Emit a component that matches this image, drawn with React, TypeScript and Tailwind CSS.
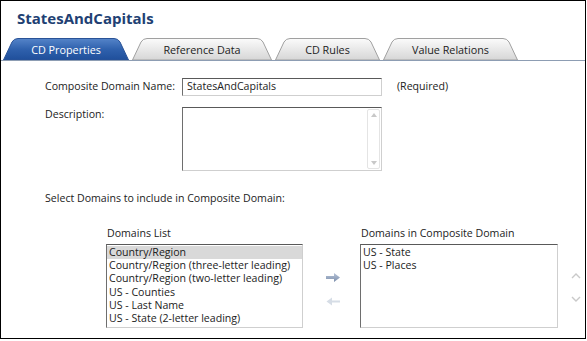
import React from "react";

const font = { fontFamily: '"Open Sans", "Noto Sans", sans-serif' };

function Tab({ w, label, active }: { w: number; label: string; active?: boolean }) {
  const h = 22;
  const d = `M0.5 ${h} L9 4 Q11 0.5 15 0.5 L${w - 15} 0.5 Q${w - 11} 0.5 ${w - 9} 4 L${w - 0.5} ${h} Z`;
  const id = active ? "gActive" : "gIdle";
  return (
    <div className="relative h-[22px] flex items-center justify-center" style={{ width: w }}>
      <svg className="absolute inset-0" width={w} height={h} viewBox={`0 0 ${w} ${h}`}>
        <defs>
          <linearGradient id="gActive" x1="0" y1="0" x2="0" y2="1">
            <stop offset="0" stopColor="#5584c9" />
            <stop offset="0.5" stopColor="#2f61ad" />
            <stop offset="1" stopColor="#1f4f9b" />
          </linearGradient>
          <linearGradient id="gIdle" x1="0" y1="0" x2="0" y2="1">
            <stop offset="0" stopColor="#fbfbfb" />
            <stop offset="1" stopColor="#d6d6d6" />
          </linearGradient>
        </defs>
        <path d={d} fill={`url(#${id})`} stroke={active ? "#2a5397" : "#a0a0a0"} strokeWidth="1" />
      </svg>
      <span
        className={`relative text-[10.8px] leading-none pt-[2px] ${active ? "text-white" : "text-[#222]"}`}
      >
        {label}
      </span>
    </div>
  );
}

function RightArrow() {
  return (
    <svg width="14" height="9" viewBox="0 0 14 9">
      <defs>
        <linearGradient id="aD" x1="0" y1="0" x2="0" y2="1">
          <stop offset="0" stopColor="#b7c4d8" />
          <stop offset="1" stopColor="#7d8fac" />
        </linearGradient>
      </defs>
      <path d="M0 3 L8 3 L8 0 L14 4.5 L8 9 L8 6 L0 6 Z" fill="url(#aD)" />
    </svg>
  );
}

function LeftArrow() {
  return (
    <svg width="14" height="9" viewBox="0 0 14 9">
      <path d="M14 3.6 L6 3.6 L6 0.5 L0.5 4.5 L6 8.5 L6 5.4 L14 5.4 Z" fill="#d6dde6" />
    </svg>
  );
}

function Chevron({ up }: { up?: boolean }) {
  return (
    <svg width="10" height="6" viewBox="0 0 10 6">
      <path
        d={up ? "M1 5 L5 1 L9 5" : "M1 1 L5 5 L9 1"}
        fill="none"
        stroke="#c9c9c9"
        strokeWidth="1.4"
      />
    </svg>
  );
}

const insetBox =
  "border border-t-[#595959] border-l-[#6e6e6e] border-r-[#cfcfcf] border-b-[#cfcfcf] bg-white";

export default function App() {
  const domains = [
    "Country/Region",
    "Country/Region (three-letter leading)",
    "Country/Region (two-letter leading)",
    "US - Counties",
    "US - Last Name",
    "US - State (2-letter leading)",
  ];
  const chosen = ["US - State", "US - Places"];
  return (
    <div className="w-[587px] h-[341px] bg-white" style={font}>
      <div className="w-[586px] h-[339px] border border-black flex flex-col overflow-hidden">
        <div className="h-[37px] pl-[16px] pt-[5px]">
          <span className="text-[15px] font-bold text-[#213f73] leading-[20px]">StatesAndCapitals</span>
        </div>
        <div className="h-[23px] flex items-end gap-[3px] pl-[2px] border-b border-[#8d9db3]">
          <Tab w={126} label="CD Properties" active />
          <Tab w={140} label="Reference Data" />
          <Tab w={105} label="CD Rules" />
          <Tab w={135} label="Value Relations" />
        </div>
        <div className="flex flex-col text-[10.6px] text-[#222] pl-[44px]">
          <div className="flex items-center mt-[17px] h-[18px]">
            <div className="w-[137px]">Composite Domain Name:</div>
            <div className={`${insetBox} w-[200px] h-[18px] flex items-center pl-[4px]`}>StatesAndCapitals</div>
            <div className="ml-[15px]">(Required)</div>
          </div>
          <div className="flex mt-[11px]">
            <div className="w-[137px] leading-[14px]">Description:</div>
            <div className={`${insetBox} w-[200px] h-[64px] flex justify-end p-[1px]`}>
              <div className="w-[13px] h-full border border-[#e4e4e4] rounded-[2px] flex flex-col items-center justify-between py-[3px]">
                <svg width="6" height="4" viewBox="0 0 6 4"><path d="M0 4 L3 0 L6 4 Z" fill="#c8c8c8" /></svg>
                <svg width="6" height="4" viewBox="0 0 6 4"><path d="M0 0 L3 4 L6 0 Z" fill="#c8c8c8" /></svg>
              </div>
            </div>
          </div>
          <div className="mt-[19px] h-[16px] leading-[16px]">Select Domains to include in Composite Domain:</div>
          <div className="flex mt-[19px] pl-[61px]">
            <div className="flex flex-col">
              <div className="h-[16px] leading-[16px] pl-[1px]">Domains List</div>
              <div className={`${insetBox} w-[197px] h-[84px] mt-[3px] flex flex-col pt-[1px] leading-[13.2px]`}>
                {domains.map((d, i) => (
                  <div key={d} className={`pl-[2px] h-[13.2px] ${i === 0 ? "bg-[#d9d9d9]" : ""}`}>
                    {d}
                  </div>
                ))}
              </div>
            </div>
            <div className="w-[57px] flex flex-col items-center pt-[48px] gap-[15px] pl-[2px]">
              <RightArrow />
              <LeftArrow />
            </div>
            <div className="flex flex-col">
              <div className="h-[16px] leading-[16px] pl-[1px]">Domains in Composite Domain</div>
              <div className={`${insetBox} w-[198px] h-[84px] mt-[3px] flex flex-col pt-[1px] leading-[13.2px]`}>
                {chosen.map((d) => (
                  <div key={d} className="pl-[2px] h-[13.2px]">
                    {d}
                  </div>
                ))}
              </div>
            </div>
            <div className="flex flex-col pl-[13px] pt-[48px] gap-[17px]">
              <Chevron up />
              <Chevron />
            </div>
          </div>
        </div>
      </div>
    </div>
  );
}
